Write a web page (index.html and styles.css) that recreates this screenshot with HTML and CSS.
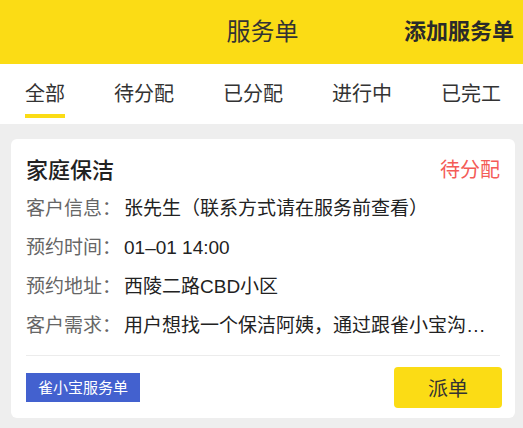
FILE: index.html
```html
<!DOCTYPE html>
<html lang="zh">
<head>
<meta charset="utf-8">
<link rel="stylesheet" href="styles.css">
</head>
<body>
<header class="topbar">
  <div class="topbar-side"></div>
  <h1 class="topbar-title">服务单</h1>
  <div class="topbar-side topbar-right"><span class="add-btn">添加服务单</span></div>
</header>
<nav class="tabs">
  <span class="tab active">全部</span>
  <span class="tab">待分配</span>
  <span class="tab">已分配</span>
  <span class="tab">进行中</span>
  <span class="tab">已完工</span>
</nav>
<main class="list">
  <section class="card">
    <div class="card-head">
      <span class="card-title">家庭保洁</span>
      <span class="card-status">待分配</span>
    </div>
    <div class="row"><span class="label">客户信息：</span><span class="value">张先生（联系方式请在服务前查看）</span></div>
    <div class="row"><span class="label">预约时间：</span><span class="value">01–01 14:00</span></div>
    <div class="row"><span class="label">预约地址：</span><span class="value">西陵二路CBD小区</span></div>
    <div class="row"><span class="label">客户需求：</span><span class="value">用户想找一个保洁阿姨，通过跟雀小宝沟<span class="dots">...</span></span></div>
    <div class="card-foot">
      <span class="tag">雀小宝服务单</span>
      <button class="dispatch">派单</button>
    </div>
  </section>
</main>
</body>
</html>
```

FILE: styles.css
```css
* { box-sizing: border-box; }
html, body { margin: 0; padding: 0; }
body {
  width: 523px;
  height: 428px;
  overflow: hidden;
  background: #eeeeee;
  font-family: "Liberation Sans", "Noto Sans CJK SC", sans-serif;
  color: #222;
}
.topbar {
  height: 64px;
  background: #fbdc15;
  display: grid;
  grid-template-columns: 1fr auto 1fr;
  align-items: center;
}
.topbar-title {
  margin: 0;
  font-size: 24px;
  font-weight: 400;
  color: #333;
  line-height: 1;
  padding-left: 2px;
}
.topbar-right {
  display: flex;
  justify-content: flex-end;
  padding-right: 9px;
}
.add-btn {
  font-size: 22px;
  font-weight: 700;
  color: #2a2a2a;
  line-height: 1;
}
.tabs {
  height: 60px;
  background: #fff;
  display: flex;
  justify-content: space-between;
  padding: 0 22px 0 25px;
}
.tab {
  position: relative;
  font-size: 20px;
  color: #333;
  line-height: 60px;
}
.tab.active::after {
  content: "";
  position: absolute;
  left: 0;
  right: 0;
  bottom: 6px;
  height: 4px;
  background: #fbdc15;
}
.list {
  padding: 15px 8px 0 11px;
}
.card {
  background: #fff;
  border-radius: 6px;
  padding: 14px 15px 10px 15px;
}
.card-head {
  display: flex;
  justify-content: space-between;
  align-items: center;
  height: 30px;
  margin-bottom: 6px;
}
.card-title {
  font-size: 22px;
  font-weight: 500;
  color: #222;
}
.card-status {
  font-size: 20px;
  color: #f45b57;
}
.row {
  display: flex;
  height: 39px;
  line-height: 39px;
  font-size: 19px;
  white-space: nowrap;
}
.label {
  color: #666;
  flex: none;
  width: 98px;
}
.value {
  color: #222;
  overflow: hidden;
  min-width: 0;
}
.dots {
  letter-spacing: 1px;
  margin-left: 1px;
}
.card-foot {
  margin-top: 10px;
  border-top: 1px solid #ececec;
  padding-top: 11px;
  display: flex;
  justify-content: space-between;
  align-items: center;
}
.tag {
  background: #4361cf;
  color: #fff;
  font-size: 15px;
  height: 29px;
  line-height: 29px;
  padding: 0 12px;
}
.dispatch {
  width: 108px;
  height: 41px;
  border: none;
  border-radius: 4px;
  background: #fbdc15;
  color: #333;
  font-family: inherit;
  font-size: 20px;
  margin-right: -2px;
}
```
